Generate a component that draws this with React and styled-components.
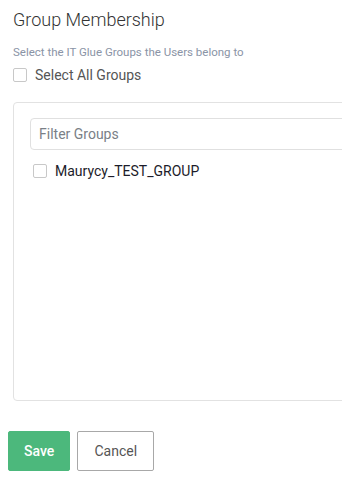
import React, { useState } from 'react';
import styled, { createGlobalStyle } from 'styled-components';

const GlobalStyle = createGlobalStyle`
  html, body {
    margin: 0;
    padding: 0;
    background: #ffffff;
  }
  body {
    font-family: Roboto, "Liberation Sans", sans-serif;
  }
`;

const Viewport = styled.div`
  width: 342px;
  overflow: hidden;
`;

const Page = styled.div`
  width: 400px;
  padding: 8px 0 0 13px;
`;

const Title = styled.h2`
  margin: 0;
  font-size: 18px;
  font-weight: 300;
  color: #333;
  line-height: 24px;
`;

const Subtitle = styled.p`
  margin: 13px 0 0;
  font-size: 11.5px;
  color: #8a94a6;
  line-height: 14px;
`;

const CheckRow = styled.label`
  display: flex;
  align-items: center;
  gap: 8px;
  margin: ${p => p.$margin || '0'};
  font-size: 14px;
  color: ${p => p.$color || '#555'};
  cursor: pointer;
`;

const Box = styled.span`
  width: 14px;
  height: 14px;
  box-sizing: border-box;
  border: 1px solid #c8c8c8;
  border-radius: 2px;
  background: ${p => (p.$checked ? '#4cb87c' : '#fff')};
  flex-shrink: 0;
`;

const Panel = styled.div`
  margin-top: 19px;
  width: 380px;
  height: 299px;
  border: 1px solid #e2e2e2;
  border-radius: 4px;
  padding: 15px 0 0 16px;
  box-sizing: border-box;
`;

const FilterInput = styled.input`
  display: block;
  width: 360px;
  height: 32px;
  box-sizing: border-box;
  border: 1px solid #e0e0e0;
  border-radius: 4px;
  padding: 0 8px;
  font-family: inherit;
  font-size: 14px;
  color: #333;
  outline: none;
  &::placeholder {
    color: #7a7f87;
  }
`;

const Actions = styled.div`
  display: flex;
  gap: 7px;
  margin: 30px 0 0 -5px;
`;

const Button = styled.button`
  height: 40px;
  padding: 0 ${p => (p.$primary ? '15px' : '16px')};
  min-width: ${p => (p.$primary ? '62px' : '77px')};
  font-family: inherit;
  font-size: 14px;
  border-radius: 2px;
  border: 1px solid ${p => (p.$primary ? '#4cb87c' : '#a8a8a8')};
  background: ${p => (p.$primary ? '#4cb87c' : '#fff')};
  color: ${p => (p.$primary ? '#fff' : '#555')};
  font-weight: ${p => (p.$primary ? 500 : 400)};
  cursor: pointer;
`;

const App = () => {
  const [all, setAll] = useState(false);
  const [group, setGroup] = useState(false);
  const [filter, setFilter] = useState('');

  return (
    <Viewport>
      <GlobalStyle />
      <Page>
        <Title>Group Membership</Title>
        <Subtitle>Select the IT Glue Groups the Users belong to</Subtitle>
        <CheckRow $margin="8px 0 0" onClick={() => setAll(!all)}>
          <Box $checked={all} />
          Select All Groups
        </CheckRow>
        <Panel>
          <FilterInput
            placeholder="Filter Groups"
            value={filter}
            onChange={e => setFilter(e.target.value)}
          />
          <CheckRow $margin="13px 0 0 3px" $color="#1c1c2a" onClick={() => setGroup(!group)}>
            <Box $checked={group} />
            Maurycy_TEST_GROUP
          </CheckRow>
        </Panel>
        <Actions>
          <Button $primary>Save</Button>
          <Button>Cancel</Button>
        </Actions>
      </Page>
    </Viewport>
  );
};

export default App;
